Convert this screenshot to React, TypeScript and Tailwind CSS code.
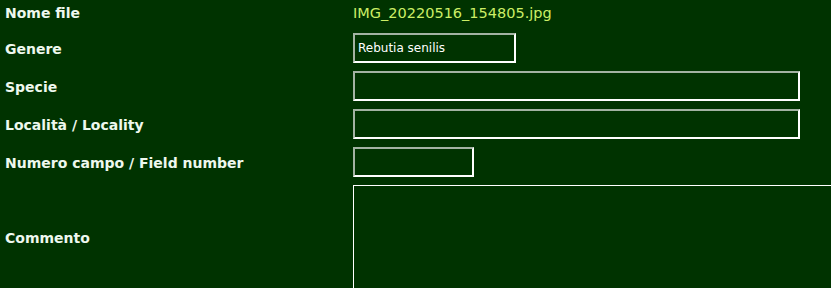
import { useState } from "react";

const label = "font-bold text-[14px] text-[#eef8ee] pl-[5px] pt-[2px] flex items-center";
const field =
  "h-[30px] bg-[#003300] text-white text-[12px] px-[3px] outline-none border-2 border-t-[#a3b3a3] border-l-[#a3b3a3] border-b-white border-r-white";

export default function App() {
  const [genere, setGenere] = useState("Rebutia senilis");
  const [specie, setSpecie] = useState("");
  const [localita, setLocalita] = useState("");
  const [campo, setCampo] = useState("");
  const [commento, setCommento] = useState("");

  return (
    <div
      className="w-[831px] h-[288px] overflow-hidden bg-[#003300]"
      style={{ fontFamily: "Verdana, 'DejaVu Sans', sans-serif" }}
    >
      <div className="grid grid-cols-[353px_1fr] gap-y-[8px]">
        {/* nome file */}
        <div className={`${label} h-[25px]`}>Nome file</div>
        <div className="h-[25px] pt-[2px] flex items-center text-[14.5px] text-[#ccee66]">
          IMG_20220516_154805.jpg
        </div>

        <div className={label}>Genere</div>
        <input
          className={`${field} w-[163px]`}
          value={genere}
          onChange={(e) => setGenere(e.target.value)}
        />

        <div className={label}>Specie</div>
        <input
          className={`${field} w-[447px]`}
          value={specie}
          onChange={(e) => setSpecie(e.target.value)}
        />

        <div className={label}>Località / Locality</div>
        <input
          className={`${field} w-[447px]`}
          value={localita}
          onChange={(e) => setLocalita(e.target.value)}
        />

        <div className={label}>Numero campo / Field number</div>
        <input
          className={`${field} w-[121px]`}
          value={campo}
          onChange={(e) => setCampo(e.target.value)}
        />

        <div className={label}>Commento</div>
        <textarea
          className="h-[104px] w-[520px] resize-none bg-[#003300] text-white text-[12px] p-[3px] outline-none border border-white"
          value={commento}
          onChange={(e) => setCommento(e.target.value)}
        />
      </div>
    </div>
  );
}
